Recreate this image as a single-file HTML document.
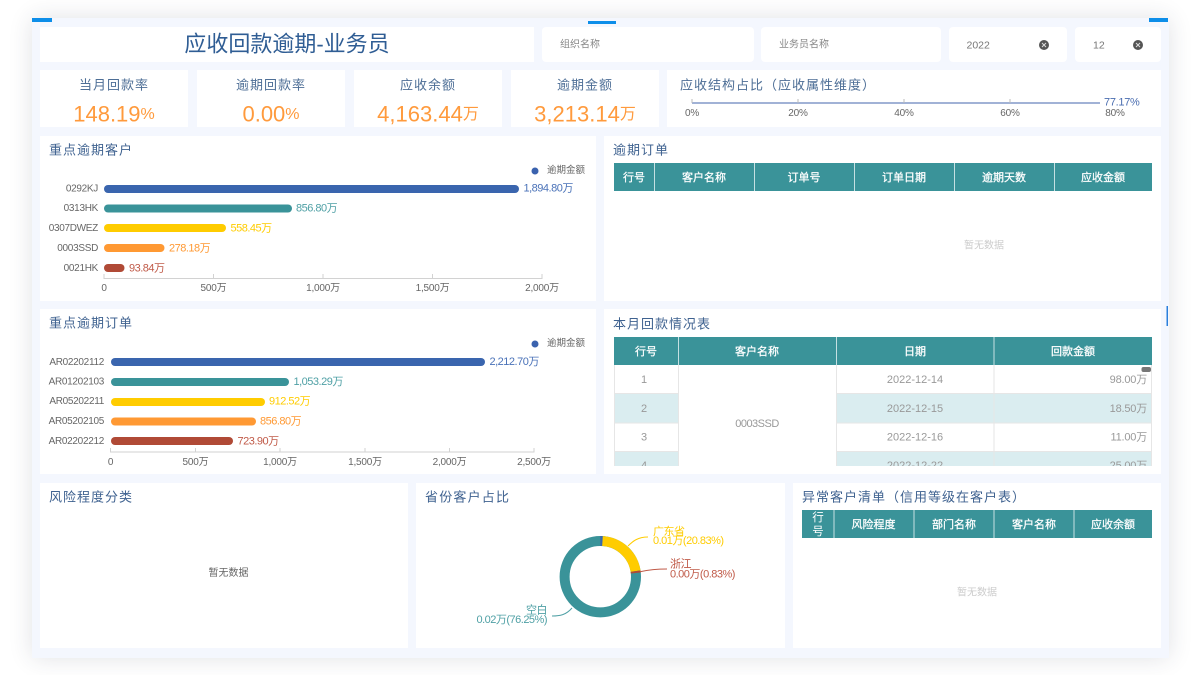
<!DOCTYPE html>
<html lang="zh"><head><meta charset="utf-8"><title>应收回款逾期-业务员</title>
<style>
html,body{margin:0;padding:0;width:1200px;height:675px;overflow:hidden;background:#fff}
#f{position:absolute;left:32px;top:18px;width:1137px;height:640px;background:#f4f7fe;box-shadow:0 0 22px rgba(40,50,70,.14)}
svg{position:absolute;left:0;top:0;filter:blur(.3px)}
text{font-family:"Liberation Sans","Noto Sans CJK SC",sans-serif;dominant-baseline:central}
.p{fill:#fff}
.t{font-size:13px;letter-spacing:1px;fill:#3f6290}
.k{font-size:13px;letter-spacing:1px;fill:#4d6e96;text-anchor:middle}
.v{font-size:22px;fill:#ff9a3c;text-anchor:middle}
.v tspan{font-size:16px}
.a{font-size:10px;fill:#666;text-anchor:middle;letter-spacing:-.2px}
.c{font-size:10px;fill:#666;text-anchor:end;letter-spacing:-.3px}
.l{font-size:11px;letter-spacing:-.5px}
.g{font-size:9.5px;fill:#666}
.h{font-size:11px;fill:#fff;text-anchor:middle;stroke:#fff;stroke-width:.25px}
.d{font-size:11px;fill:#999;text-anchor:middle}
.r{font-size:11px;fill:#999;text-anchor:end;letter-spacing:-.2px}
.f{font-size:10px;fill:#888}
.x{stroke:#d2d2d2;stroke-width:1;fill:none}
</style></head><body>
<div id="f"></div>
<svg width="1200" height="675" viewBox="0 0 1200 675">
<rect x="32" y="18" width="20" height="4" fill="#0d8ee9"/>
<rect x="588" y="21" width="28" height="3" fill="#0d8ee9"/>
<rect x="1149" y="18" width="19" height="4" fill="#0d8ee9"/>
<rect x="1166.500" y="306" width="1.500" height="20" fill="#2a7fdc"/>

<!-- top row -->
<rect class="p" x="40" y="27" width="494" height="35"/>
<text x="287" y="44" font-size="22" fill="#2f5d94" text-anchor="middle">应收回款逾期-业务员</text>
<rect class="p" x="542" y="27" width="212" height="35" rx="4"/>
<text class="f" x="560" y="45">组织名称</text>
<rect class="p" x="761" y="27" width="180" height="35" rx="4"/>
<text class="f" x="779" y="45">业务员名称</text>
<rect class="p" x="949" y="27" width="118" height="35" rx="4"/>
<text class="f" x="966.500" y="45.500" style="font-size:10.500px;fill:#777">2022</text>
<circle cx="1044" cy="45" r="5" fill="#555"/><path d="M1042 43l4 4m0-4l-4 4" stroke="#ddd" stroke-width="1"/>
<rect class="p" x="1075" y="27" width="86" height="35" rx="4"/>
<text class="f" x="1093" y="45.500" style="font-size:10.500px;fill:#777">12</text>
<circle cx="1138" cy="45" r="5" fill="#555"/><path d="M1136 43l4 4m0-4l-4 4" stroke="#ddd" stroke-width="1"/>

<!-- KPI -->
<rect class="p" x="40" y="70" width="148" height="57"/>
<text class="k" x="114" y="85">当月回款率</text>
<text class="v" x="114" y="114">148.19<tspan>%</tspan></text>
<rect class="p" x="197" y="70" width="148" height="57"/>
<text class="k" x="271" y="85">逾期回款率</text>
<text class="v" x="271" y="114">0.00<tspan>%</tspan></text>
<rect class="p" x="354" y="70" width="148" height="57"/>
<text class="k" x="428" y="85">应收余额</text>
<text class="v" x="428" y="114">4,163.44<tspan>万</tspan></text>
<rect class="p" x="511" y="70" width="148" height="57"/>
<text class="k" x="585" y="85">逾期金额</text>
<text class="v" x="585" y="114">3,213.14<tspan>万</tspan></text>
<rect class="p" x="667" y="70" width="494" height="57"/>
<text class="k" x="680" y="85" style="text-anchor:start">应收结构占比（应收属性维度）</text>
<path d="M692 103H1100" stroke="#8299c8" stroke-width="1.500"/>
<path d="M692 99v4M798 99v4M904 99v4M1010 99v4" stroke="#bbb" stroke-width="1"/>
<text class="a" x="692" y="113.500">0%</text><text class="a" x="798" y="113.500">20%</text><text class="a" x="904" y="113.500">40%</text><text class="a" x="1010" y="113.500">60%</text><text class="a" x="1115" y="113.500">80%</text>
<text class="l" x="1104" y="102.500" fill="#4a6db0" style="letter-spacing:-.3px">77.17%</text>

<!-- chart 1 -->
<rect class="p" x="40" y="136" width="556" height="165"/>
<text class="t" x="49" y="150">重点逾期客户</text>
<circle cx="535" cy="171" r="3.500" fill="#3a62ae"/><text class="g" x="547" y="170.500">逾期金额</text>
<g stroke-linecap="round" stroke-width="8">
<path d="M108 189H515" stroke="#3a65ae"/><path d="M108 208.500H288" stroke="#3a9399"/><path d="M108 228H222" stroke="#ffcc00"/><path d="M108 248H160.500" stroke="#ff9933"/><path d="M108 268H120.500" stroke="#b04a36"/>
</g>
<text class="c" x="98" y="189">0292KJ</text><text class="c" x="98" y="208.500">0313HK</text><text class="c" x="98" y="228.500">0307DWEZ</text><text class="c" x="98" y="248.500">0003SSD</text><text class="c" x="98" y="268.500">0021HK</text>
<text class="l" x="523.500" y="188.500" fill="#4a72b8">1,894.80万</text><text class="l" x="296" y="208.500" fill="#4fa0a5">856.80万</text><text class="l" x="230.500" y="228.500" fill="#ffcc00">558.45万</text><text class="l" x="169" y="248.500" fill="#ff9933">278.18万</text><text class="l" x="129" y="268.500" fill="#c05a48">93.84万</text>
<path class="x" d="M104 274v4.500H542v-4.500M213.500 274v4.500M323 274v4.500M432.500 274v4.500"/>
<text class="a" x="104" y="288.500">0</text><text class="a" x="213.500" y="288.500">500万</text><text class="a" x="323" y="288.500">1,000万</text><text class="a" x="432.500" y="288.500">1,500万</text><text class="a" x="542" y="288.500">2,000万</text>

<!-- table 1 -->
<rect class="p" x="604" y="136" width="557" height="165"/>
<text class="t" x="613" y="150">逾期订单</text>
<rect x="614" y="163" width="538" height="28" fill="#3a9399"/>
<path d="M654.500 163v28M754.500 163v28M854.500 163v28M954.500 163v28M1054.500 163v28" stroke="#c5e0e2" stroke-width="1"/>
<text class="h" x="634" y="178">行号</text><text class="h" x="704" y="178">客户名称</text><text class="h" x="804" y="178">订单号</text><text class="h" x="904" y="178">订单日期</text><text class="h" x="1004" y="178">逾期天数</text><text class="h" x="1103" y="178">应收金额</text>
<text x="984" y="246" font-size="10" fill="#ccc" text-anchor="middle">暂无数据</text>

<!-- chart 2 -->
<rect class="p" x="40" y="309" width="556" height="165"/>
<text class="t" x="49" y="323">重点逾期订单</text>
<circle cx="535" cy="344" r="3.500" fill="#3a62ae"/><text class="g" x="547" y="343.500">逾期金额</text>
<g stroke-linecap="round" stroke-width="8">
<path d="M115 362H481" stroke="#3a65ae"/><path d="M115 382H285" stroke="#3a9399"/><path d="M115 402H261" stroke="#ffcc00"/><path d="M115 421.500H252" stroke="#ff9933"/><path d="M115 441H229" stroke="#b04a36"/>
</g>
<text class="c" x="104" y="362.500">AR02202112</text><text class="c" x="104" y="382">AR01202103</text><text class="c" x="104" y="401.500">AR05202211</text><text class="c" x="104" y="421.500">AR05202105</text><text class="c" x="104" y="441.500">AR02202212</text>
<text class="l" x="489.500" y="362" fill="#4a72b8">2,212.70万</text><text class="l" x="293.500" y="382" fill="#4fa0a5">1,053.29万</text><text class="l" x="269" y="401.500" fill="#ffcc00">912.52万</text><text class="l" x="260" y="421.500" fill="#ff9933">856.80万</text><text class="l" x="237.500" y="441.500" fill="#c05a48">723.90万</text>
<path class="x" d="M110.500 448v4H534v-4M195.500 448v4M280 448v4M365 448v4M449.500 448v4"/>
<text class="a" x="110.500" y="462.500">0</text><text class="a" x="195.500" y="462.500">500万</text><text class="a" x="280" y="462.500">1,000万</text><text class="a" x="365" y="462.500">1,500万</text><text class="a" x="449.500" y="462.500">2,000万</text><text class="a" x="534" y="462.500">2,500万</text>

<!-- table 2 -->
<rect class="p" x="604" y="309" width="557" height="165"/>
<text class="t" x="613" y="324">本月回款情况表</text>
<rect x="614" y="337" width="538" height="28" fill="#3a9399"/>
<path d="M678.500 337v28M836.500 337v28M994 337v28" stroke="#c5e0e2" stroke-width="1"/>
<text class="h" x="646" y="352">行号</text><text class="h" x="757" y="352">客户名称</text><text class="h" x="915" y="352">日期</text><text class="h" x="1073" y="352">回款金额</text>
<rect x="614" y="393.500" width="64" height="29.500" fill="#daedf0"/><rect x="836.500" y="393.500" width="315.500" height="29.500" fill="#daedf0"/>
<rect x="614" y="452" width="64" height="14" fill="#daedf0"/><rect x="836.500" y="452" width="315.500" height="14" fill="#daedf0"/>
<path d="M614.500 365v101M678.500 365v101M836.500 365v101M994 365v101M1151.500 365v101" stroke="#e6e6e6" stroke-width="1"/>
<path d="M614 393.500h64M836.500 393.500h315.500M614 423h64M836.500 423h315.500M614 451.500h64M836.500 451.500h315.500" stroke="#e6e6e6" stroke-width="1"/>
<text class="d" x="644" y="380">1</text><text class="d" x="644" y="409">2</text><text class="d" x="644" y="437.500">3</text>
<text class="d" x="757" y="424" style="letter-spacing:-.5px">0003SSD</text>
<text class="d" x="915" y="380">2022-12-14</text><text class="d" x="915" y="409">2022-12-15</text><text class="d" x="915" y="437.500">2022-12-16</text>
<text class="r" x="1147" y="380">98.00万</text><text class="r" x="1147" y="409">18.50万</text><text class="r" x="1147" y="437.500">11.00万</text>
<svg x="600" y="440" width="560" height="26" style="position:static;filter:none" viewBox="600 440 560 26">
<text class="d" x="644" y="466">4</text><text class="d" x="915" y="466">2022-12-22</text><text class="r" x="1147" y="466">25.00万</text>
</svg>
<rect x="1141.500" y="367" width="9.500" height="5" rx="2" fill="#777"/>

<!-- bottom -->
<rect class="p" x="40" y="483" width="368" height="165"/>
<text class="t" x="49" y="497">风险程度分类</text>
<text x="228.500" y="573.500" font-size="10" fill="#666" text-anchor="middle">暂无数据</text>

<rect class="p" x="416" y="483" width="369" height="165"/>
<text class="t" x="425" y="497" style="letter-spacing:1.200px">省份客户占比</text>
<g fill="none" stroke-width="10">
<circle cx="600.300" cy="576.700" r="35.700" stroke="#3a9399"/>
<path d="M600.300 541A35.700 35.700 0 0 1 602.500 541.070" stroke="#3a65ae"/>
<path d="M602.500 541.070A35.700 35.700 0 0 1 635.560 571.100" stroke="#ffcc00"/>
<path d="M635.560 571.100A35.700 35.700 0 0 1 635.800 573" stroke="#b04a36"/>
</g>
<path d="M628 546C633 541 638 537 648 537" fill="none" stroke="#ffcc00" stroke-width="1"/>
<path d="M640 571.700C648 570 656 569 667 569" fill="none" stroke="#c05a48" stroke-width="1"/>
<path d="M572 608C566 615 560 616 552 616" fill="none" stroke="#4fa0a5" stroke-width="1"/>
<text class="l" x="653" y="532" fill="#ffcc00">广东省</text><text class="l" x="653" y="541" fill="#ffcc00">0.01万(20.83%)</text>
<text class="l" x="670" y="564.500" fill="#c05a48">浙江</text><text class="l" x="670" y="574.500" fill="#c05a48">0.00万(0.83%)</text>
<text class="l" x="547" y="610.500" fill="#4fa0a5" text-anchor="end">空白</text><text class="l" x="547" y="620" fill="#4fa0a5" text-anchor="end">0.02万(76.25%)</text>

<rect class="p" x="793" y="483" width="368" height="165"/>
<text class="t" x="802" y="497">异常客户清单（信用等级在客户表）</text>
<rect x="802" y="510" width="350" height="28" fill="#3a9399"/>
<path d="M834 510v28M914 510v28M994 510v28M1074 510v28" stroke="#c5e0e2" stroke-width="1"/>
<text x="818" y="518" font-size="11.500" fill="#fff" text-anchor="middle">行</text><text x="818" y="532" font-size="11.500" fill="#fff" text-anchor="middle">号</text>
<text class="h" x="873.500" y="525">风险程度</text><text class="h" x="954" y="525">部门名称</text><text class="h" x="1034" y="525">客户名称</text><text class="h" x="1113" y="525">应收余额</text>
<text x="977" y="593" font-size="10" fill="#ccc" text-anchor="middle">暂无数据</text>
</svg>
</body></html>
